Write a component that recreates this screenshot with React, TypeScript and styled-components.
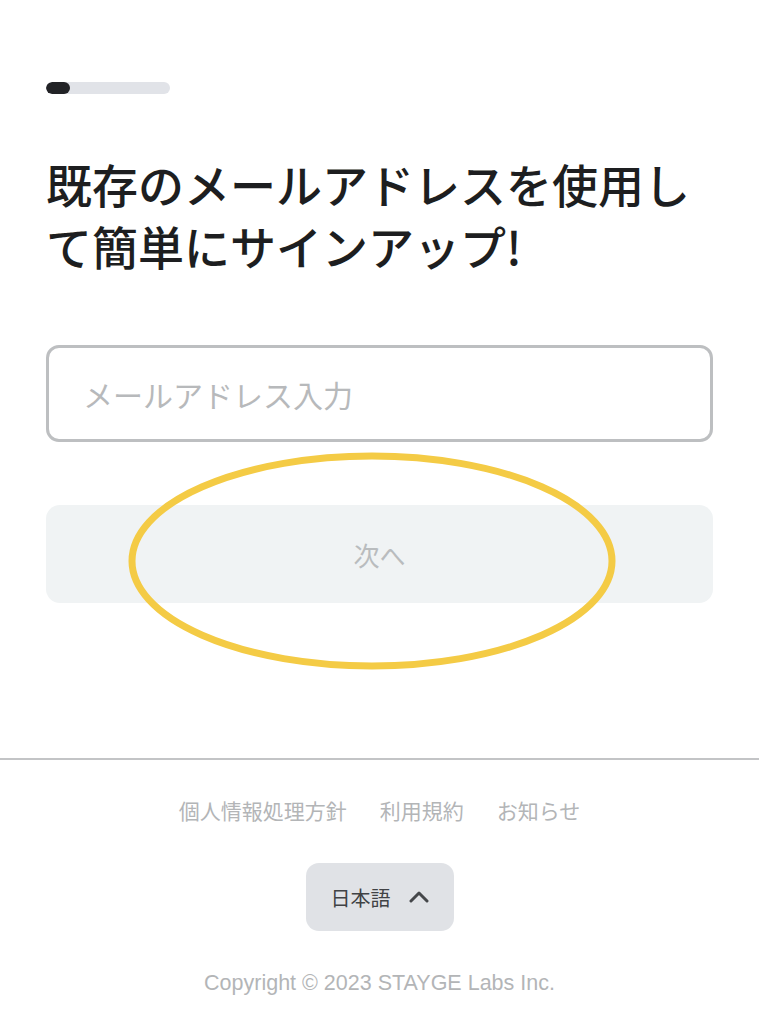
import React from "react";
import styled, { createGlobalStyle } from "styled-components";

const Global = createGlobalStyle`
  html, body { margin: 0; padding: 0; background: #fff; }
  body { font-family: "Liberation Sans", "Noto Sans CJK JP", sans-serif; }
  * { box-sizing: border-box; }
`;

const Page = styled.div`
  width: 759px;
  min-height: 1024px;
  display: flex;
  flex-direction: column;
  background: #fff;
`;

const Main = styled.main`
  position: relative;
  padding: 82px 46px 0 46px;
  display: flex;
  flex-direction: column;
  height: 758px;
`;

const Track = styled.div`
  width: 124px;
  height: 12px;
  border-radius: 6px;
  background: #e1e3e8;
  overflow: hidden;
`;

const Fill = styled.div`
  height: 100%;
  border-radius: 6px;
  background: #222326;
`;

const Heading = styled.h1`
  margin: 58px 0 0 0;
  font-family: "Noto Sans CJK JP", sans-serif;
  font-size: 46px;
  font-weight: 500;
  line-height: 62px;
  color: #1d1e20;
`;

const Input = styled.input`
  margin-top: 69px;
  width: 100%;
  height: 97px;
  border: 3px solid #bdbfc1;
  border-radius: 13px;
  padding: 0 34px;
  font-family: "Noto Sans CJK JP", sans-serif;
  font-size: 30px;
  color: #222;
  outline: none;
  &::placeholder { color: #b7b9bb; }
`;

const NextButton = styled.button`
  margin-top: 63px;
  width: 100%;
  height: 98px;
  border: none;
  border-radius: 14px;
  background: #f0f3f4;
  color: #b9bcbe;
  font-family: "Noto Sans CJK JP", sans-serif;
  font-size: 26px;
`;

const Annotation = styled.svg`
  position: absolute;
  left: 128px;
  top: 452px;
  overflow: visible;
`;

const Footer = styled.footer`
  border-top: 2px solid #c3c4c6;
  display: flex;
  flex-direction: column;
  align-items: center;
  padding-top: 35px;
`;

const Links = styled.nav`
  display: flex;
  gap: 33px;
  font-family: "Noto Sans CJK JP", sans-serif;
  font-size: 21px;
  line-height: 30px;
  color: #b3b5b7;
`;

const LangButton = styled.button`
  margin-top: 38px;
  width: 148px;
  height: 68px;
  border: none;
  border-radius: 13px;
  background: #e0e2e6;
  display: flex;
  align-items: center;
  justify-content: center;
  gap: 18px;
  font-family: "Noto Sans CJK JP", sans-serif;
  font-size: 20px;
  color: #404245;
`;

const Copyright = styled.p`
  margin: 40px 0 0 0;
  font-family: "Liberation Sans", "Noto Sans CJK JP", sans-serif;
  font-size: 21.5px;
  color: #b3b5b7;
`;

export default function App() {
  return (
    <Page>
      <Global />
      <Main>
        <Track>
          <Fill style={{ width: `${(24 / 124) * 100}%` }} />
        </Track>
        <Heading>
          既存のメールアドレスを使用して簡単にサインアップ!
        </Heading>
        <Input placeholder="メールアドレス入力" />
        <NextButton>次へ</NextButton>
        <Annotation width="488" height="218" viewBox="0 0 488 218">
          <ellipse cx="244" cy="109" rx="240" ry="105" fill="none" stroke="#f4cb45" strokeWidth="7" />
        </Annotation>
      </Main>
      <Footer>
        <Links>
          <span>個人情報処理方針</span>
          <span>利用規約</span>
          <span>お知らせ</span>
        </Links>
        <LangButton>
          <span>日本語</span>
          <svg width="20" height="12" viewBox="0 0 20 12">
            <path d="M2 10 L10 2 L18 10" fill="none" stroke="#45474a" strokeWidth="3" strokeLinecap="round" strokeLinejoin="round" />
          </svg>
        </LangButton>
        <Copyright>Copyright © 2023 STAYGE Labs Inc.</Copyright>
      </Footer>
    </Page>
  );
}
